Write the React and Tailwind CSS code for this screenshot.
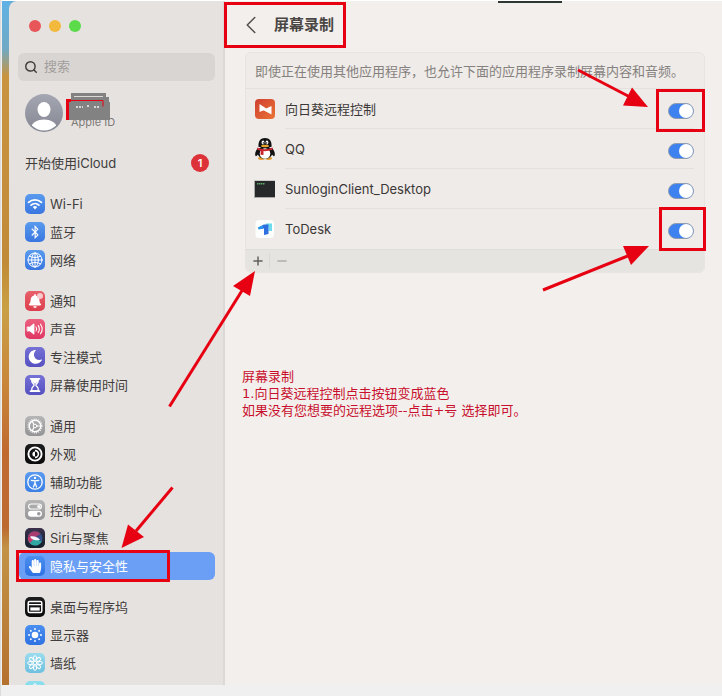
import { useState } from 'react'
import { Search, ChevronLeft, Plus, Minus } from 'lucide-react'
import { FaBluetoothB, FaHandPaper, FaMoon, FaBell } from 'react-icons/fa'

const groups = [
  [
    { id: 'wifi', label: 'Wi-Fi', bg: 'from-[#5a9bee] to-[#3a76e0]' },
    { id: 'bluetooth', label: '蓝牙', bg: 'from-[#5a9bee] to-[#3a76e0]' },
    { id: 'network', label: '网络', bg: 'from-[#5a9bee] to-[#3a76e0]' },
  ],
  [
    { id: 'notify', label: '通知', bg: 'from-[#e8606a] to-[#dc3d4c]' },
    { id: 'sound', label: '声音', bg: 'from-[#ec5f7f] to-[#df3762]' },
    { id: 'focus', label: '专注模式', bg: 'from-[#7571d6] to-[#5650c0]' },
    { id: 'screentime', label: '屏幕使用时间', bg: 'from-[#7571d6] to-[#5650c0]' },
  ],
  [
    { id: 'general', label: '通用', bg: 'from-[#b5b5b6] to-[#949496]' },
    { id: 'appearance', label: '外观', bg: 'from-[#1c1c1c] to-[#0c0c0c]' },
    { id: 'access', label: '辅助功能', bg: 'from-[#5a9bee] to-[#3a7fe6]' },
    { id: 'control', label: '控制中心', bg: 'from-[#b5b5b6] to-[#949496]' },
    { id: 'siri', label: 'Siri与聚焦', bg: 'from-[#3b2f4b] to-[#15202e]' },
    { id: 'privacy', label: '隐私与安全性', bg: 'from-[#4b8ff0] to-[#2f72e2]' },
  ],
  [
    { id: 'dock', label: '桌面与程序坞', bg: 'from-[#1c1c1c] to-[#0c0c0c]' },
    { id: 'display', label: '显示器', bg: 'from-[#4b8ff0] to-[#2f72e2]' },
    { id: 'wallpaper', label: '墙纸', bg: 'from-[#9adcee] to-[#6fc0df]' },
    { id: 'saver', label: '', bg: 'from-[#8fe0ee] to-[#6ccbe2]' },
  ],
]

const apps = [
  { id: 'sunlogin', name: '向日葵远程控制' },
  { id: 'qq', name: 'QQ' },
  { id: 'client', name: 'SunloginClient_Desktop' },
  { id: 'todesk', name: 'ToDesk' },
]

function NavGlyph({ id }) {
  if (id === 'bluetooth') return <FaBluetoothB className="w-3.5 h-3.5" />
  if (id === 'privacy') return <FaHandPaper className="w-3.5 h-3.5" />
  if (id === 'focus') return <FaMoon className="w-3.5 h-3.5 -rotate-12" />
  if (id === 'notify') {
    return (
      <span className="relative">
        <FaBell className="w-3.5 h-3.5" />
        <span className="absolute -top-px -right-px w-1.5 h-1.5 rounded-full bg-[#f6c9cc]" />
      </span>
    )
  }
  return (
    <svg viewBox="0 0 20 20" className="w-5 h-5" fill="none" stroke="currentColor" strokeWidth="1.4" strokeLinecap="round" aria-hidden="true">
      {id === 'wifi' && (
        <>
          <path d="M3.6 8.4a9.2 9.2 0 0 1 12.8 0M6.1 11.1a5.7 5.7 0 0 1 7.8 0" strokeWidth="1.8" />
          <path d="M10 15.4l-2.2-2.3a3.2 3.2 0 0 1 4.4 0z" fill="currentColor" stroke="none" />
        </>
      )}
      {id === 'network' && (
        <g strokeWidth="1">
          <circle cx="10" cy="10" r="7" />
          <ellipse cx="10" cy="10" rx="3.3" ry="7" />
          <path d="M10 3v14M3 10h14M4.3 6.2c3.4 1.8 8 1.8 11.4 0M4.3 13.8c3.4-1.8 8-1.8 11.4 0" />
        </g>
      )}
      {id === 'sound' && (
        <>
          <path d="M2.5 8h2.3L9 4.8v10.4L4.8 12H2.5z" fill="currentColor" strokeWidth="0.8" strokeLinejoin="round" />
          <path d="M11 8a3.4 3.4 0 0 1 0 4M13.2 6.6a6 6 0 0 1 0 6.8M15.5 5.2a8.4 8.4 0 0 1 0 9.6" strokeWidth="1.1" />
        </>
      )}
      {id === 'screentime' && (
        <>
          <path d="M5.6 3.8h8.8M5.6 16.2h8.8" strokeWidth="1.8" />
          <path d="M6.8 4v2.2c0 1.8 2.3 2.6 2.3 3.8s-2.3 2-2.3 3.8V16h6.4v-2.2c0-1.8-2.3-2.6-2.3-3.8s2.3-2 2.3-3.8V4z" strokeWidth="1.3" />
          <path d="M7 4h6v2.4L10 9 7 6.4z" fill="currentColor" stroke="none" />
        </>
      )}
      {id === 'general' && (
        <>
          <circle cx="10" cy="10" r="6.9" strokeWidth="1.2" strokeDasharray="1 1.2" strokeLinecap="butt" />
          <circle cx="10" cy="10" r="5.8" />
          <circle cx="10" cy="10" r="1.8" strokeWidth="1" />
          <path d="M11.8 10h3.5M9 8.5L7.3 5.4M9 11.5l-1.7 3.1" strokeWidth="1.2" />
        </>
      )}
      {id === 'appearance' && (
        <>
          <circle cx="10" cy="10" r="6.6" strokeWidth="1.9" />
          <path d="M10 5.8a4.2 4.2 0 0 1 0 8.4z" fill="currentColor" stroke="none" />
          <path d="M10 7.4a2.6 2.6 0 0 0 0 5.2z" fill="currentColor" stroke="none" />
          <path d="M10 7.4a2.6 2.6 0 0 1 0 5.2z" fill="#0f0f0f" stroke="none" />
        </>
      )}
      {id === 'access' && (
        <>
          <circle cx="10" cy="10" r="7.2" strokeWidth="1.3" />
          <circle cx="10" cy="5.9" r="1.2" fill="currentColor" stroke="none" />
          <path d="M6.3 8.3l3.7.6 3.7-.6M10 9v2.4M10 11l-1.6 4M10 11l1.6 4" strokeWidth="1.3" />
        </>
      )}
      {id === 'control' && (
        <>
          <rect x="3.6" y="4" width="12.8" height="5" rx="2.5" strokeWidth="1.2" />
          <circle cx="13.8" cy="6.5" r="1.6" fill="currentColor" stroke="none" />
          <rect x="3" y="10.8" width="14" height="6" rx="3" fill="currentColor" stroke="none" />
          <circle cx="13.8" cy="13.8" r="1.8" fill="#9a9a9c" stroke="none" />
        </>
      )}
      {id === 'siri' && (
        <g stroke="none">
          <circle cx="10" cy="10" r="7.5" fill="#31405c" />
          <path d="M3 8c2-5 9-6.5 12.5-2L9.5 10z" fill="#a83a72" />
          <path d="M3 9c-.5 5 3 8.500 7 8.500 3.500 0 6.500-2 7.200-5.500L9 10z" fill="#2fa8a4" />
          <path d="M3 8.500c-.5 3 .5 5 2 6.500L10 10z" fill="#c93a6c" />
          <path d="M15.500 6c2.500 2.500 2 5 1 7.500L9.500 10z" fill="#35508f" />
          <path d="M5 8.600c4-1 8 .8 10 3.200-4.500 1.300-8.500.4-10-3.200z" fill="#f3f0fa" />
        </g>
      )}
      {id === 'dock' && (
        <>
          <rect x="3.2" y="4.5" width="13.6" height="11" rx="1.5" strokeWidth="1.5" />
          <path d="M3.5 7.7h13" strokeWidth="1.2" />
          <rect x="5.3" y="10.4" width="9.4" height="3.2" fill="currentColor" stroke="none" />
        </>
      )}
      {id === 'display' && (
        <>
          <circle cx="10" cy="10" r="3.3" fill="currentColor" stroke="none" />
          <path d="M10 4v.1M10 15.9v.1M4 10h.1M15.9 10h.1M5.800 5.800l.1.1M14.100 14.100l.1.1M5.800 14.200l.1-.1M14.100 5.900l.1-.1" strokeWidth="1.8" />
        </>
      )}
      {(id === 'wallpaper' || id === 'saver') && (
        <>
          <circle cx="10" cy="10" r="1.8" strokeWidth="1" />
          {[0, 45, 90, 135, 180, 225, 270, 315].map((deg) => (
            <ellipse key={deg} cx="10" cy="5" rx="1.6" ry="2.3" strokeWidth="1" transform={`rotate(${deg} 10 10)`} />
          ))}
        </>
      )}
    </svg>
  )
}

function AppIcon({ id }) {
  return (
    <svg viewBox="0 0 22 22" className="w-[22px] h-[22px] shrink-0" aria-hidden="true">
      {id === 'sunlogin' && (
        <>
          <defs>
            <linearGradient id="sun" x1="0" y1="0" x2="1" y2="1">
              <stop offset="0" stopColor="#cf3f31" />
              <stop offset="1" stopColor="#ea7434" />
            </linearGradient>
          </defs>
          <rect x="1" y="1" width="20" height="20" rx="4" fill="url(#sun)" />
          <path d="M5.5 6l7.500 5L5.500 14z" fill="#fff" />
          <path d="M17.500 8v8.500L9 12z" fill="#fff" />
        </>
      )}
      {id === 'qq' && (
        <>
          <ellipse cx="7.5" cy="20.5" rx="3.5" ry="1.4" fill="#e59a26" />
          <ellipse cx="14.5" cy="20.5" rx="3.5" ry="1.4" fill="#e59a26" />
          <path d="M4 10C1.5 12.5.5 16 1.5 18c.8.5 1.8-.5 2.5-1.5M18 10c2.5 2.5 3.5 6 2.5 8-.8.5-1.8-.5-2.5-1.500" fill="#111" />
          <ellipse cx="11" cy="14.5" rx="7.5" ry="6.5" fill="#111" />
          <ellipse cx="11" cy="15.5" rx="5.3" ry="5.3" fill="#fff" />
          <path d="M4.500 9C4 3 6.500 0 11 0s7 3 6.500 9z" fill="#111" />
          <ellipse cx="9" cy="4.6" rx="1.4" ry="2" fill="#fff" />
          <ellipse cx="13" cy="4.6" rx="1.4" ry="2" fill="#fff" />
          <circle cx="9.4" cy="4.9" r=".7" />
          <circle cx="12.6" cy="4.9" r=".7" />
          <ellipse cx="11" cy="8" rx="4" ry="1.2" fill="#e5a32b" />
          <path d="M3.500 9.500c4.500 2.200 10.500 2.200 15 0l.5 1.800c-3 1.500-6.500 2-9.500 1.800V17l-3-.3.200-3.900L3 11.500z" fill="#c9252f" />
        </>
      )}
      {id === 'client' && (
        <>
          <rect x="0" y="2.5" width="21" height="17.5" fill="#a9a9a8" />
          <rect x="1" y="3" width="20" height="16" fill="#26282a" />
          <path d="M3 5.8h7.5" stroke="#5fa565" strokeWidth="1.5" strokeDasharray="1.5 .5" />
        </>
      )}
      {id === 'todesk' && (
        <>
          <rect x="1.5" y="2" width="18.5" height="18" rx="3.5" fill="#fcfdfd" />
          <path d="M12 5.500h6V13h-3.500V9H12z" fill="#6fdcec" />
          <path d="M4 9.500l6-3h4.500v9.500L10 17v-6.500l-4.500.5z" fill="#2e6fe0" />
          <path d="M4 9.500l5-2v3.200l-4.500.8z" fill="#2a95ee" />
        </>
      )}
    </svg>
  )
}

function Arrow({ className, width, height, line, head }) {
  return (
    <svg className={`absolute pointer-events-none z-20 ${className}`} width={width} height={height} aria-hidden="true">
      <path d={line} stroke="#e60012" strokeWidth="3" fill="none" />
      <path d={head} fill="#e60012" />
    </svg>
  )
}

function Sidebar() {
  const [active, setActive] = useState('privacy')

  return (
    <aside className="relative w-[216px] shrink-0 rounded-tl-lg border-r-2 border-[#dcd8d6] bg-[#e6e2e0] pl-2.5 pr-2">
      <div className="flex gap-2 pl-2.5 pt-[19px]">
        <span className="w-3 h-3 rounded-full bg-[#e9565a]" />
        <span className="w-3 h-3 rounded-full bg-[#f2b93d]" />
        <span className="w-3 h-3 rounded-full bg-[#5bdb4a]" />
      </div>

      <label className="mt-[21px] -ml-px flex h-7 items-center gap-1.5 rounded-md bg-[#d9d5d3] px-1.5">
        <Search className="w-3.5 h-3.5 text-[#3f3d3c]" strokeWidth={2.5} />
        <input
          type="text"
          placeholder="搜索"
          aria-label="搜索"
          className="min-w-0 flex-1 bg-transparent text-[13px] placeholder:text-[#a29e9c] focus:outline-none"
        />
      </label>

      <div className="mt-[13px] flex items-center gap-2 pl-1.5">
        <svg viewBox="0 0 38 38" className="w-[38px] h-[38px] shrink-0" aria-hidden="true">
          <defs>
            <linearGradient id="avatar" x1="0" y1="0" x2="0" y2="1">
              <stop offset="0" stopColor="#a4a6b1" />
              <stop offset="1" stopColor="#858893" />
            </linearGradient>
            <clipPath id="face"><circle cx="19" cy="19" r="17.5" /></clipPath>
          </defs>
          <circle cx="19" cy="19" r="19" fill="url(#avatar)" />
          <g clipPath="url(#face)" fill="#fff">
            <ellipse cx="19" cy="15.5" rx="6.5" ry="7.5" />
            <ellipse cx="19" cy="33" rx="12.5" ry="7.5" />
          </g>
        </svg>
        <div className="relative mb-0.5 self-end text-[11px] leading-4 text-[#7d7a78]">
          Apple ID
          {/* name is blacked out by hand */}
          <svg className="absolute -left-[5px] -top-[21px]" width="46" height="30" aria-hidden="true">
            <path d="M0 6h6v21H0z" fill="#e60012" />
            <path d="M3 9h8v18H3z" fill="#828282" />
            <path d="M5 0h35v4h3v5h1v18H3V9h2z" fill="#828282" />
            <path d="M8 3.5h29" stroke="#dcd9d8" strokeWidth="1" />
            <path d="M5 7.5h32v6" stroke="#e60012" strokeWidth="1" fill="none" />
            <path d="M10 14h7M21 13h3M28 14h6" stroke="#d5d5d5" strokeWidth="2" strokeDasharray="2 1" />
          </svg>
        </div>
      </div>

      <a href="#icloud" className="mt-5 flex h-[22px] items-center justify-between px-1.5 text-[13px] text-[#403d3c]">
        <span className="pt-0.5">开始使用iCloud</span>
        <span className="flex h-[18px] w-[18px] items-center justify-center rounded-full bg-[#dc3238] text-[11px] font-semibold text-white">1</span>
      </a>

      <nav className="mt-4 flex flex-col gap-[13px]">
        {groups.map((items, i) => (
          <ul key={i}>
            {items.map((item) => (
              <li key={item.id} className="relative">
                <a
                  href={`#${item.id}`}
                  aria-label={item.label || item.id}
                  onClick={() => setActive(item.id)}
                  className={`flex h-7 items-center gap-[5px] rounded-md pl-1.5 text-[13px] ${
                    active === item.id ? 'bg-[#6b9ff5] text-white' : 'text-[#403d3c]'
                  }`}
                >
                  <span className={`flex h-5 w-5 shrink-0 items-center justify-center rounded-[5px] bg-linear-to-b text-white ${item.bg}`}>
                    <NavGlyph id={item.id} />
                  </span>
                  <span className="pt-0.5">{item.label}</span>
                </a>
                {item.id === 'privacy' && (
                  <span className="absolute -left-[3px] -top-0.5 h-8 w-[154px] border-3 border-[#e60012] pointer-events-none" />
                )}
              </li>
            ))}
          </ul>
        ))}
      </nav>

      <Arrow className="left-[110px] top-[483px]" width={60} height={70} line="M53.5 3.5L17 47" head="M2.5 64L9 40.5l16 12.5z" />
    </aside>
  )
}

function ScreenRecording() {
  const [allowed, setAllowed] = useState({ sunlogin: true, qq: true, client: true, todesk: true })
  const toggle = (id) => setAllowed((prev) => ({ ...prev, [id]: !prev[id] }))

  return (
    <main className="relative min-w-0 flex-1 bg-[#f3efec] pl-5 pr-[17px]">
      <header className="relative -ml-[21px] mt-px flex h-[46px] w-[122px] items-center gap-2 border-3 border-[#e60012] pl-[9px]">
        <button type="button" aria-label="返回" className="text-[#55514f]">
          <ChevronLeft className="w-[30px] h-[30px]" strokeWidth={1.25} />
        </button>
        <h1 className="whitespace-nowrap text-[15px] font-bold text-[#4a4644]">屏幕录制</h1>
      </header>

      <section className="mt-1 rounded-md border border-[#e8e4e1] bg-[#efebe8]">
        <p className="h-[35px] whitespace-nowrap pl-[9px] text-[13px] leading-9 text-[#85817e]">
          即使正在使用其他应用程序，也允许下面的应用程序录制屏幕内容和音频。
        </p>
        <ul className="border-t border-[#e4e0dd]">
          {apps.map((app, i) => (
            <li key={app.id} className="flex h-10 items-center gap-[9px] pl-2 pr-2.5">
              <AppIcon id={app.id} />
              <div className={`flex h-10 flex-1 items-center justify-between ${i < apps.length - 1 ? 'border-b border-[#e4e0dd]' : ''}`}>
                <label htmlFor={app.id} className="pt-0.5 text-[13px] text-[#3b3837]">{app.name}</label>
                <span className="relative mt-1 flex">
                  <input
                    id={app.id}
                    type="checkbox"
                    role="switch"
                    checked={allowed[app.id]}
                    onChange={() => toggle(app.id)}
                    className="h-4 w-[26px] appearance-none rounded-full border border-[#8f9bb0] bg-[#c9c5c3] before:block before:h-3.5 before:w-3.5 before:rounded-full before:bg-white checked:bg-[#3d82ee] checked:before:translate-x-2.5"
                  />
                  {app.id === 'sunlogin' && (
                    <span className="absolute -left-3 -top-3.5 h-[43px] w-[49px] border-3 border-[#e60012] pointer-events-none" />
                  )}
                  {app.id === 'todesk' && (
                    <span className="absolute -left-[9px] -top-4 h-11 w-[47px] border-3 border-[#e60012] pointer-events-none" />
                  )}
                </span>
              </div>
            </li>
          ))}
        </ul>
        <div className="flex h-[23px] items-center rounded-b-md border-t border-[#deddd9] bg-[#e6e4e1]">
          <button type="button" aria-label="添加" className="flex h-4 w-6 items-center justify-center border-r border-[#dbd9d6] text-[#62605e]">
            <Plus className="w-3.5 h-3.5" strokeWidth={2.5} />
          </button>
          <button type="button" aria-label="移除" className="flex h-4 w-6 items-center justify-center text-[#b0adaa]">
            <Minus className="w-3.5 h-3.5" strokeWidth={2.5} />
          </button>
        </div>
      </section>

      <div className="-ml-[3px] mt-[95px] font-['DejaVu_Sans','Noto_Sans_CJK_SC',sans-serif] text-[13px] leading-[17px] text-[#c8102e]">
        <p>屏幕录制</p>
        <p>1.向日葵远程控制点击按钮变成蓝色</p>
        <p>如果没有您想要的远程选项--点击+号 选择即可。</p>
      </div>

      <Arrow className="right-[70px] top-[63px]" width={80} height={50} line="M6 6L58 33" head="M76 43L60 23.5l-9 18z" />
      <Arrow className="right-[70px] top-[240px]" width={114} height={55} line="M5 49L92 14" head="M111 5L85 5l8 19z" />
      <Arrow className="-left-[60px] top-[265px]" width={95} height={145} line="M4.5 140.5L78 23" head="M90 5L68 20l17 10z" />
    </main>
  )
}

export default function App() {
  return (
    <div className="flex h-screen flex-col border-l border-[#dcdcdc] bg-[#f0f0f0] pl-px font-['Inter','Noto_Sans_CJK_SC',sans-serif]">
      <div className="relative flex min-h-0 flex-1 overflow-hidden border-t border-white bg-linear-to-b from-[#62aedd] from-0% to-[#62aedd] to-100%">
        <div className="w-[7px] shrink-0 bg-[linear-gradient(to_bottom,#5fb2e6_0%,#6fa9c4_7%,#c99440_11%,#c18a36_38%,#c9a045_45%,#c9863a_56%,#c06a30_66%,#bd6a30_77%,#c29347_80%,#b5712e_100%)]" />
        <Sidebar />
        <ScreenRecording />
        <span className="absolute right-40 -top-px z-10 h-[3px] w-16 bg-[#2f3732]" />
      </div>
      <div className="h-[11px] shrink-0" />
    </div>
  )
}
